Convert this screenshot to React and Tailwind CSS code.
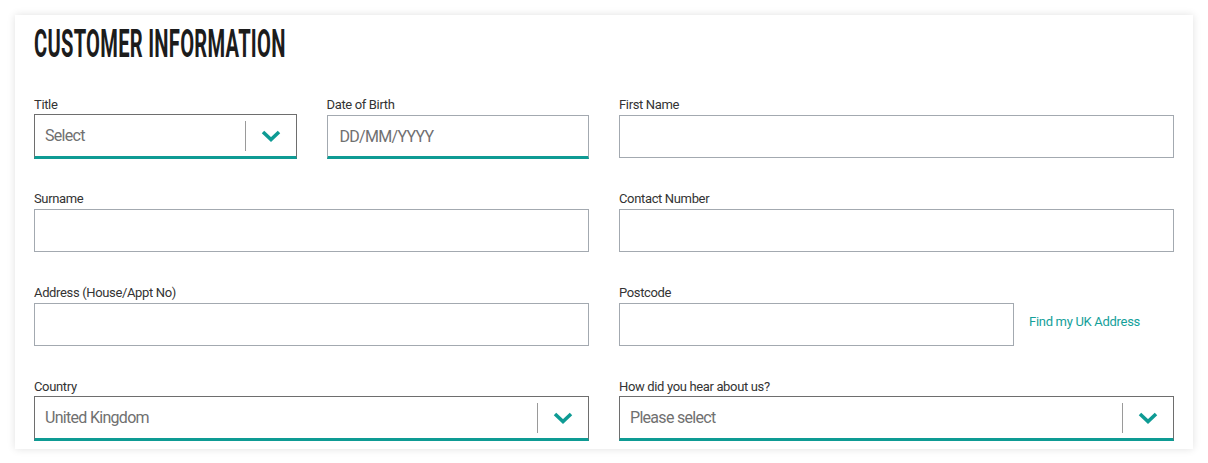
import { useState } from 'react';

const Chevron = () => (
  <svg width="20" height="12" viewBox="0 0 20 12" fill="none">
    <polyline points="2,2 10,9.5 18,2" stroke="#0e9b94" strokeWidth="3.6" strokeLinecap="butt" strokeLinejoin="miter" />
  </svg>
);

const Label = ({ children }) => (
  <label className="block h-[17px] text-[13px] leading-[16px] tracking-[-0.35px] text-[#333]">{children}</label>
);

const SelectBox = ({ value }) => (
  <div className="flex h-[45px] items-center border border-b-[3px] border-[#6e6e6e] border-b-[#0e9b94] bg-white">
    <span className="flex-1 pl-[10px] text-[16px] tracking-[-0.7px] text-[#707070]">{value}</span>
    <span className="h-[30px] w-px bg-[#9a9a9a]" />
    <span className="flex w-[50px] items-center justify-center">
      <Chevron />
    </span>
  </div>
);

const TextBox = ({ placeholder = '', value, onChange }) => (
  <input
    value={value}
    onChange={onChange}
    placeholder={placeholder}
    className="block h-[43px] w-full border border-[#a3a9b0] bg-white px-[12px] text-[16px] tracking-[-0.7px] text-[#333] outline-none"
  />
);

const App = () => {
  const [form, setForm] = useState({ dob: '', first: '', surname: '', phone: '', address: '', postcode: '' });
  const set = (k) => (e) => setForm({ ...form, [k]: e.target.value });

  return (
    <div className="min-h-screen bg-white pt-[15px] font-['Roboto',sans-serif]">
      <div className="mx-[15px] bg-white px-[19px] pb-[8px] shadow-[0_0_8px_rgba(0,0,0,0.12)]">
        <h2 className="h-[82px] pt-[11px]">
          <span className="inline-block origin-left scale-x-[0.53] text-[38px] font-bold leading-[36px] tracking-[0.5px] whitespace-nowrap text-[#1c1c1c]">
            CUSTOMER INFORMATION
          </span>
        </h2>

        <div className="grid grid-cols-2 gap-x-[30px] gap-y-[32px]">
          {/* Title + DOB */}
          <div className="grid grid-cols-2 gap-x-[30px]">
            <div>
              <Label>Title</Label>
              <SelectBox value="Select" />
            </div>
            <div>
              <Label>Date of Birth</Label>
              <input
                value={form.dob}
                onChange={set('dob')}
                placeholder="DD/MM/YYYY"
                className="mt-px block h-[44px] w-full border border-b-[3px] border-[#a3a9b0] border-b-[#0e9b94] bg-white px-[12px] text-[16px] tracking-[-0.7px] text-[#333] outline-none placeholder:text-[#707070]"
              />
            </div>
          </div>
          <div>
            <Label>First Name</Label>
            <div className="py-px">
              <TextBox value={form.first} onChange={set('first')} />
            </div>
          </div>

          <div>
            <Label>Surname</Label>
            <div className="py-px">
              <TextBox value={form.surname} onChange={set('surname')} />
            </div>
          </div>
          <div>
            <Label>Contact Number</Label>
            <div className="py-px">
              <TextBox value={form.phone} onChange={set('phone')} />
            </div>
          </div>

          <div>
            <Label>Address (House/Appt No)</Label>
            <div className="py-px">
              <TextBox value={form.address} onChange={set('address')} />
            </div>
          </div>
          <div>
            <Label>Postcode</Label>
            <div className="flex items-center py-px">
              <div className="w-[395px]">
                <TextBox value={form.postcode} onChange={set('postcode')} />
              </div>
              <a href="#" className="mb-[6px] ml-[15px] text-[13px] tracking-[-0.3px] text-[#14a09a]">
                Find my UK Address
              </a>
            </div>
          </div>

          <div>
            <Label>Country</Label>
            <SelectBox value="United Kingdom" />
          </div>
          <div>
            <Label>How did you hear about us?</Label>
            <SelectBox value="Please select" />
          </div>
        </div>
      </div>
    </div>
  );
};

export default App;
